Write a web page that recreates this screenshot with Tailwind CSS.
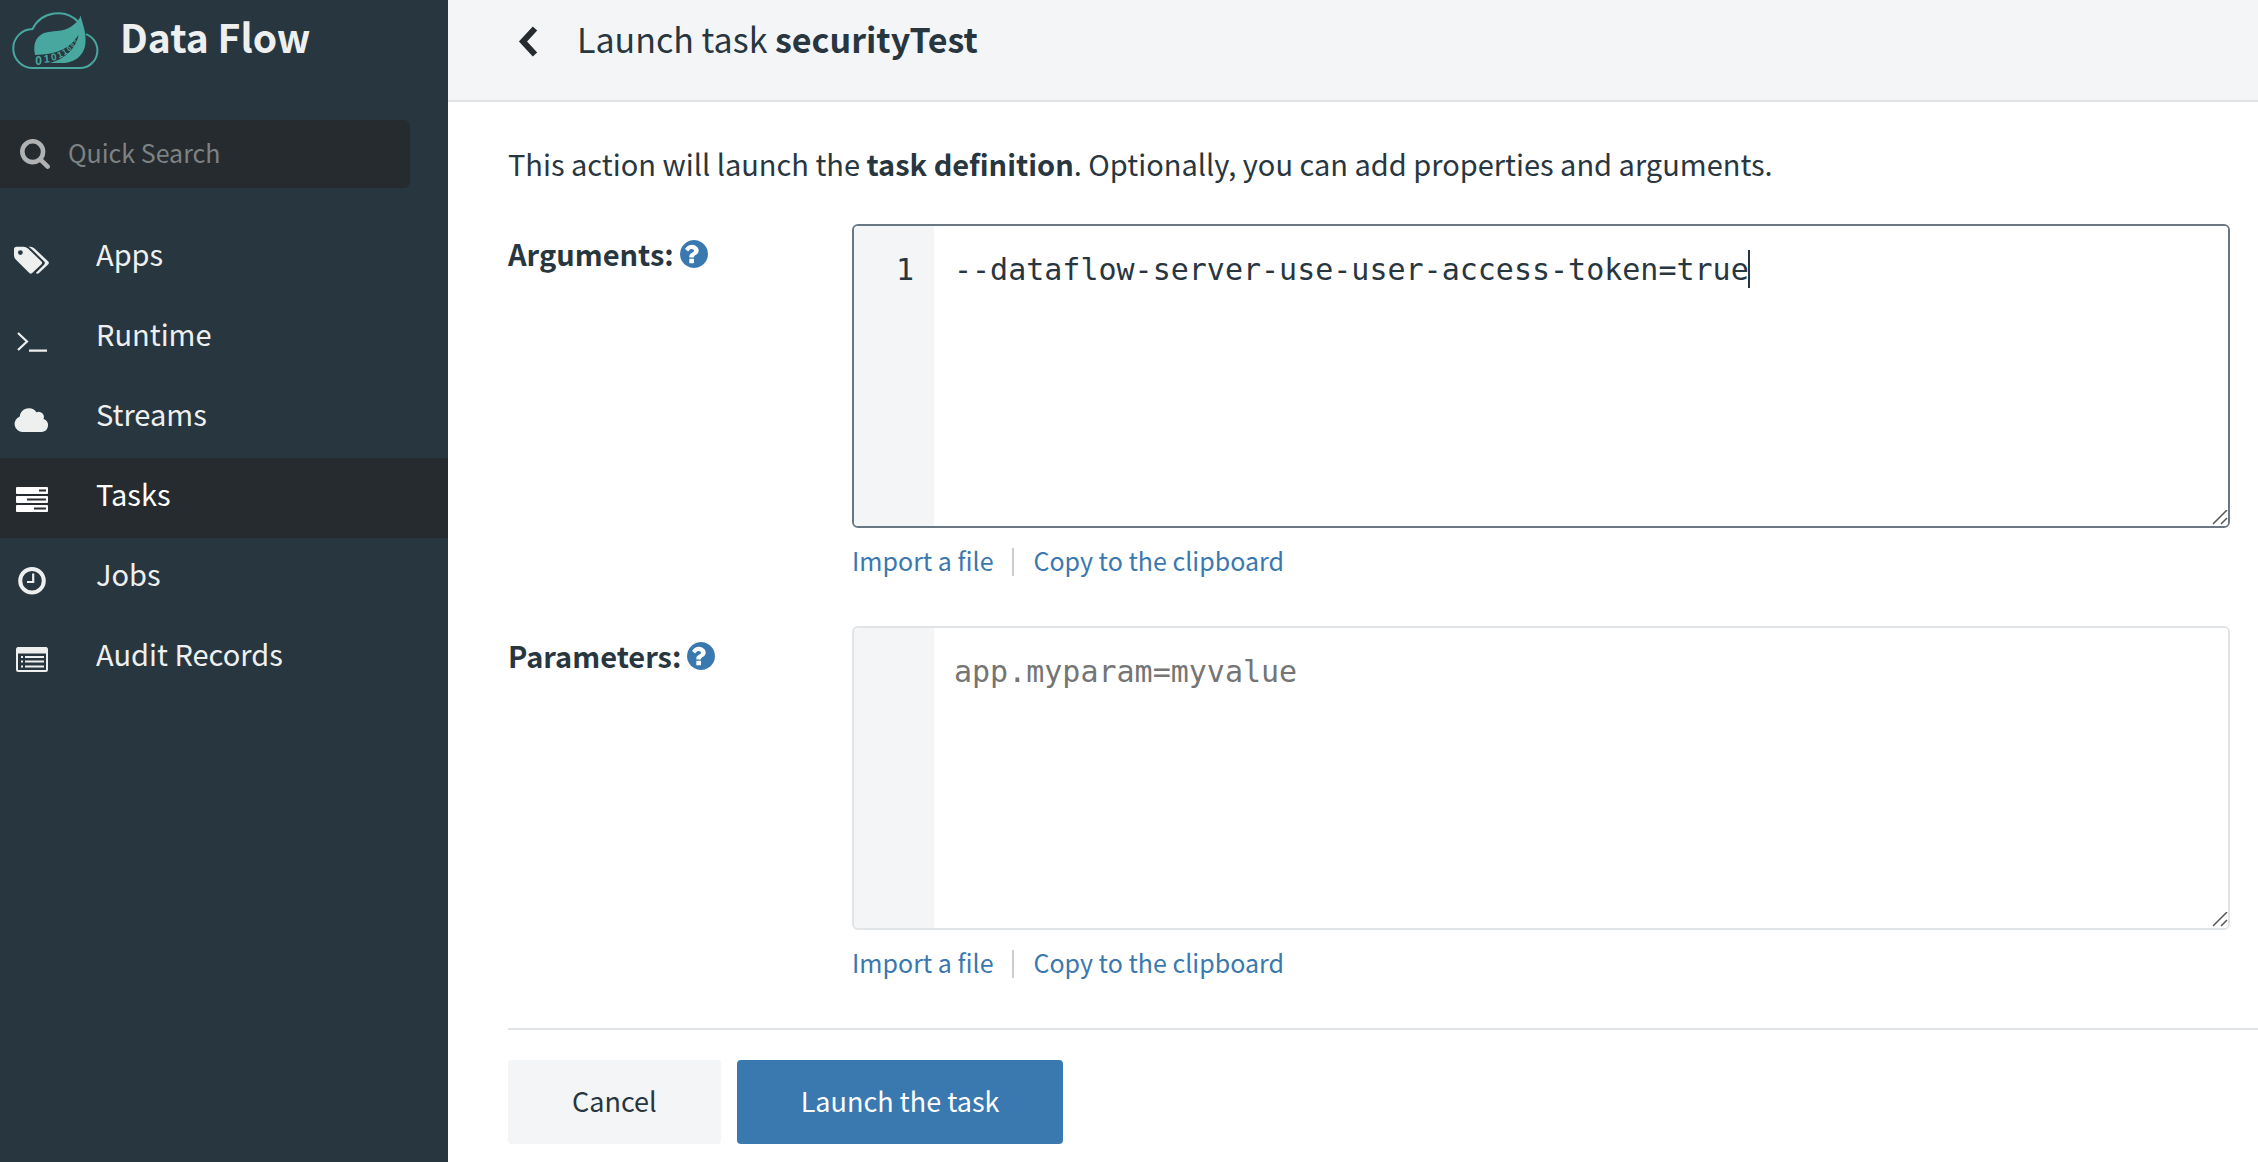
<!DOCTYPE html>
<html lang="en">
<head>
<meta charset="utf-8">
<title>Data Flow - Launch task</title>
<script src="https://cdn.jsdelivr.net/npm/@tailwindcss/browser@4"></script>
</head>
<body class="flex min-h-screen bg-white font-['Noto_Sans_CJK_SC',sans-serif] text-[29px] leading-10 text-[#28363f]">

<aside class="w-[448px] shrink-0 bg-[#28363f] text-[#eef0f0]">
  <a href="#" class="flex h-[120px] items-start">
    <svg class="h-20 w-[110px] shrink-0" viewBox="0 0 110 80" fill="none" aria-hidden="true">
      <path d="M79 22.500A28.500 28.500 0 0 0 32.500 29A19.500 19.500 0 0 0 33 68H80A17.500 17.500 0 0 0 86 34.100" stroke="#48a79f" stroke-width="2"/>
      <path fill="#48a79f" d="M80.500 15.500C83 25 86 32 85.500 42C85 55 75 63 62 63H50C62 60 76 50 78.500 35C70 48 58 54.500 35 55C33 45 35 37 44 33C52 30 62 33 72 26C76 23 79.500 20 80.500 15.500Z"/>
      <g fill="#48a79f" font-family="Liberation Sans, sans-serif" font-weight="bold" text-anchor="middle">
        <text font-size="12" transform="translate(38.500 64.500)">0</text>
        <text font-size="11" transform="translate(47 62.500) rotate(-5)">1</text>
        <text font-size="10" transform="translate(54.500 60.500) rotate(-12)">0</text>
        <text font-size="9" transform="translate(61 57.500) rotate(-22)">1</text>
        <text font-size="8" transform="translate(66 54.500) rotate(-30)">1</text>
        <text font-size="7" transform="translate(70.500 50.500) rotate(-40)">0</text>
        <text font-size="6" transform="translate(74 46.500) rotate(-50)">0</text>
        <text font-size="5" transform="translate(76.500 42) rotate(-55)">0</text>
      </g>
    </svg>
    <span class="pt-3 pl-[10px] text-[39px] leading-12 font-bold">Data Flow</span>
  </a>

  <label class="flex h-[68px] w-[410px] items-center gap-[18px] rounded-r-md bg-[#262b2f] pl-5">
    <svg class="size-[30px] shrink-0" viewBox="64 128 1664 1664" fill="#b0b2b4" aria-hidden="true"><path d="M1216 832q0-185-131.500-316.500t-316.500-131.500-316.500 131.500-131.500 316.500 131.500 316.500 316.500 131.500 316.500-131.500 131.500-316.500zm512 832q0 52-38 90t-90 38q-54 0-90-38l-343-342q-179 124-399 124-143 0-273.500-55.500t-225-150-150-225-55.500-273.500 55.500-273.500 150-225 225-150 273.500-55.500 273.500 55.500 225 150 150 225 55.500 273.500q0 220-124 399l343 343q37 37 37 90z"/></svg>
    <input type="text" aria-label="Quick Search" placeholder="Quick Search" class="h-10 min-w-0 flex-1 bg-transparent pb-1 text-[25px] outline-none placeholder:text-[#7d8284]">
  </label>

  <nav class="mt-[30px]">
    <a href="#" class="flex h-20 items-start gap-11 pl-3">
      <svg class="mt-[22px] size-10 shrink-0" viewBox="0 0 40 40" fill="currentColor" aria-hidden="true">
        <path fill-rule="evenodd" d="M4.500 6.700H11.500Q14 6.700 16 8.500L29.500 21.500Q30.800 22.800 29.500 24.200L20.200 33.100Q18.800 34.300 17.300 33L4 19.800Q2 17.800 2 15.500V9.200Q2 6.700 4.500 6.700ZM8.400 10.200A2.400 2.400 0 1 0 8.400 15A2.400 2.400 0 1 0 8.400 10.200Z"/>
        <path d="M16.500 6.700H18.500Q20.500 6.700 22.500 8.500L36.300 21.500Q37.500 22.800 36.300 24.200L27 33.100Q25.500 34.400 23.800 32.900L32 24.700Q33.700 22.900 32 21.200L19.500 9Q18 7.500 16.500 6.700Z"/>
      </svg>
      <span class="pt-[15px]">Apps</span>
    </a>
    <a href="#" class="flex h-20 items-start gap-11 pl-3">
      <svg class="mt-[22px] size-10 shrink-0" viewBox="0 0 40 40" fill="none" stroke="currentColor" stroke-width="2.200" aria-hidden="true"><path d="M6 13L15 21.500L6 30M17 30.600H35"/></svg>
      <span class="pt-[15px]">Runtime</span>
    </a>
    <a href="#" class="flex h-20 items-start gap-11 pl-3">
      <svg class="mt-[22px] size-10 shrink-0" viewBox="0 0 40 40" fill="currentColor" aria-hidden="true"><path d="M10.500 32A8 8 0 0 1 7.800 16.500A9.200 9.200 0 0 1 24.500 12.300A5.200 5.200 0 0 1 31.500 19A6.700 6.700 0 0 1 30 32Z"/></svg>
      <span class="pt-[15px]">Streams</span>
    </a>
    <a href="#" aria-current="page" class="flex h-20 items-start gap-11 bg-[#262b2f] pl-3 text-white">
      <svg class="mt-[22px] size-10 shrink-0" viewBox="0 0 40 40" aria-hidden="true">
        <g fill="currentColor"><rect x="4" y="7" width="32" height="7" rx="1"/><rect x="4" y="16" width="32" height="7" rx="1"/><rect x="4" y="25" width="32" height="7" rx="1"/></g>
        <path d="M27 10.500H34M15 19.500H34M22 28.500H34" stroke="#262b2f" stroke-width="2"/>
      </svg>
      <span class="pt-[15px]">Tasks</span>
    </a>
    <a href="#" class="flex h-20 items-start gap-11 pl-3">
      <svg class="mt-[22px] size-10 shrink-0" viewBox="0 0 40 40" fill="none" stroke="currentColor" aria-hidden="true"><circle cx="20" cy="20.700" r="11.800" stroke-width="4"/><path d="M21.200 13.500V22H15" stroke-width="2.200"/></svg>
      <span class="pt-[15px]">Jobs</span>
    </a>
    <a href="#" class="flex h-20 items-start gap-11 pl-3">
      <svg class="mt-[22px] size-10 shrink-0" viewBox="0 0 40 40" fill="none" stroke="currentColor" aria-hidden="true">
        <rect x="5" y="8" width="30" height="23" rx="1.500" stroke-width="2"/>
        <path d="M5 10.500H35" stroke-width="6"/>
        <path d="M9 17H11M13 17H32M9 21.500H11M13 21.500H32M9 26.500H11M13 26.500H32" stroke-width="2"/>
      </svg>
      <span class="pt-[15px]">Audit Records</span>
    </a>
  </nav>
</aside>

<main class="min-w-0 flex-1">
  <header class="flex h-[102px] items-start border-b-2 border-[#e0e4e6] bg-[#f4f5f7] pl-[70px]">
    <button type="button" aria-label="Back" class="mt-[26px] h-8 w-5">
      <svg class="h-8 w-5" viewBox="0 0 20 32" fill="none" stroke="#262b2f" stroke-width="6" aria-hidden="true"><path d="M17 2.500L5 15.500L17 28.500"/></svg>
    </button>
    <h1 class="mt-[15px] ml-[39px] text-[34px] leading-12">Launch task <b class="font-bold">securityTest</b></h1>
  </header>

  <form class="pt-[41px] pl-[60px]">
    <p>This action will launch the <b class="font-bold">task definition</b>. Optionally, you can add properties and arguments.</p>

    <div class="mt-[41px] flex pr-7">
      <div class="flex w-[344px] shrink-0 items-start gap-[6px] pt-[9px] font-bold">
        <label for="arguments">Arguments:</label>
        <button type="button" aria-label="About arguments" class="mt-[7px]">
          <svg class="size-7" viewBox="128 128 1536 1536" fill="#3a78b0" aria-hidden="true"><path d="M896 1376v-192q0-14-9-23t-23-9h-192q-14 0-23 9t-9 23v192q0 14 9 23t23 9h192q14 0 23-9t9-23zm256-672q0-88-55.500-163t-138.500-116-170-41q-243 0-371 213-15 24 8 42l132 100q7 6 19 6 16 0 25-12 53-68 86-92 34-24 86-24 48 0 85.500 26t37.500 59q0 38-20 61t-68 45q-63 28-115.500 86.500t-52.500 125.500v36q0 14 9 23t23 9h192q14 0 23-9t9-23q0-19 21.500-49.500t54.500-49.500q32-18 49-28.500t46-35 44.500-48 28-60.500 12.500-81zm512 192q0 209-103 385.500t-279.500 279.500-385.500 103-385.500-103-279.500-279.500-103-385.500 103-385.500 279.500-279.500 385.500-103 385.500 103 279.500 279.500 103 385.500z"/></svg>
        </button>
      </div>
      <div class="min-w-0 flex-1">
        <div class="relative flex h-[304px] overflow-hidden rounded-md border-2 border-[#687782] font-['DejaVu_Sans_Mono',monospace] text-[30px]">
          <div class="w-20 bg-[#f4f5f7] pt-6 pr-5 text-right">1</div>
          <textarea id="arguments" class="min-w-0 flex-1 resize-none bg-white px-5 pt-6 outline-none">--dataflow-server-use-user-access-token=true</textarea>
          <span class="absolute top-6 left-[894px] h-[38px] w-0.5 bg-[#28363f]"></span>
          <svg class="absolute right-0 bottom-0 size-4" viewBox="0 0 16 16" stroke="#555" stroke-width="1.500" aria-hidden="true"><path d="M1 14L15 0M9 14L15 8"/></svg>
        </div>
        <div class="mt-3 mb-0.5 flex items-center gap-[19px] text-[25px] text-[#3a78b0]">
          <a href="#">Import a file</a>
          <span class="mt-1 h-7 w-0.5 bg-[#ccc]"></span>
          <a href="#">Copy to the clipboard</a>
        </div>
      </div>
    </div>

    <div class="mt-11 flex pr-7">
      <div class="flex w-[344px] shrink-0 items-start gap-[6px] pt-[9px] font-bold">
        <label for="parameters">Parameters:</label>
        <button type="button" aria-label="About parameters" class="mt-[7px]">
          <svg class="size-7" viewBox="128 128 1536 1536" fill="#3a78b0" aria-hidden="true"><path d="M896 1376v-192q0-14-9-23t-23-9h-192q-14 0-23 9t-9 23v192q0 14 9 23t23 9h192q14 0 23-9t9-23zm256-672q0-88-55.500-163t-138.500-116-170-41q-243 0-371 213-15 24 8 42l132 100q7 6 19 6 16 0 25-12 53-68 86-92 34-24 86-24 48 0 85.500 26t37.500 59q0 38-20 61t-68 45q-63 28-115.500 86.500t-52.500 125.500v36q0 14 9 23t23 9h192q14 0 23-9t9-23q0-19 21.500-49.500t54.500-49.500q32-18 49-28.500t46-35 44.500-48 28-60.500 12.500-81zm512 192q0 209-103 385.500t-279.500 279.500-385.500 103-385.500-103-279.500-279.500-103-385.500 103-385.500 279.500-279.500 385.500-103 385.500 103 279.500 279.500 103 385.500z"/></svg>
        </button>
      </div>
      <div class="min-w-0 flex-1">
        <div class="relative flex h-[304px] overflow-hidden rounded-md border-2 border-[#e0e4e6] font-['DejaVu_Sans_Mono',monospace] text-[30px]">
          <div class="w-20 bg-[#f4f5f7]"></div>
          <textarea id="parameters" placeholder="app.myparam=myvalue" class="min-w-0 flex-1 resize-none bg-white px-5 pt-6 outline-none placeholder:text-[#757575]"></textarea>
          <svg class="absolute right-0 bottom-0 size-4" viewBox="0 0 16 16" stroke="#555" stroke-width="1.500" aria-hidden="true"><path d="M1 14L15 0M9 14L15 8"/></svg>
        </div>
        <div class="mt-3 mb-0.5 flex items-center gap-[19px] text-[25px] text-[#3a78b0]">
          <a href="#">Import a file</a>
          <span class="mt-1 h-7 w-0.5 bg-[#ccc]"></span>
          <a href="#">Copy to the clipboard</a>
        </div>
      </div>
    </div>

    <div class="mt-11 flex gap-4 border-t-2 border-[#e0e4e6] pt-[30px] text-[27px]">
      <button type="button" class="h-21 rounded bg-[#f4f5f7] px-16 pb-0.5">Cancel</button>
      <button type="submit" class="h-21 rounded bg-[#3a78b0] px-16 pb-0.5 text-white">Launch the task</button>
    </div>
  </form>
</main>
</body>
</html>
